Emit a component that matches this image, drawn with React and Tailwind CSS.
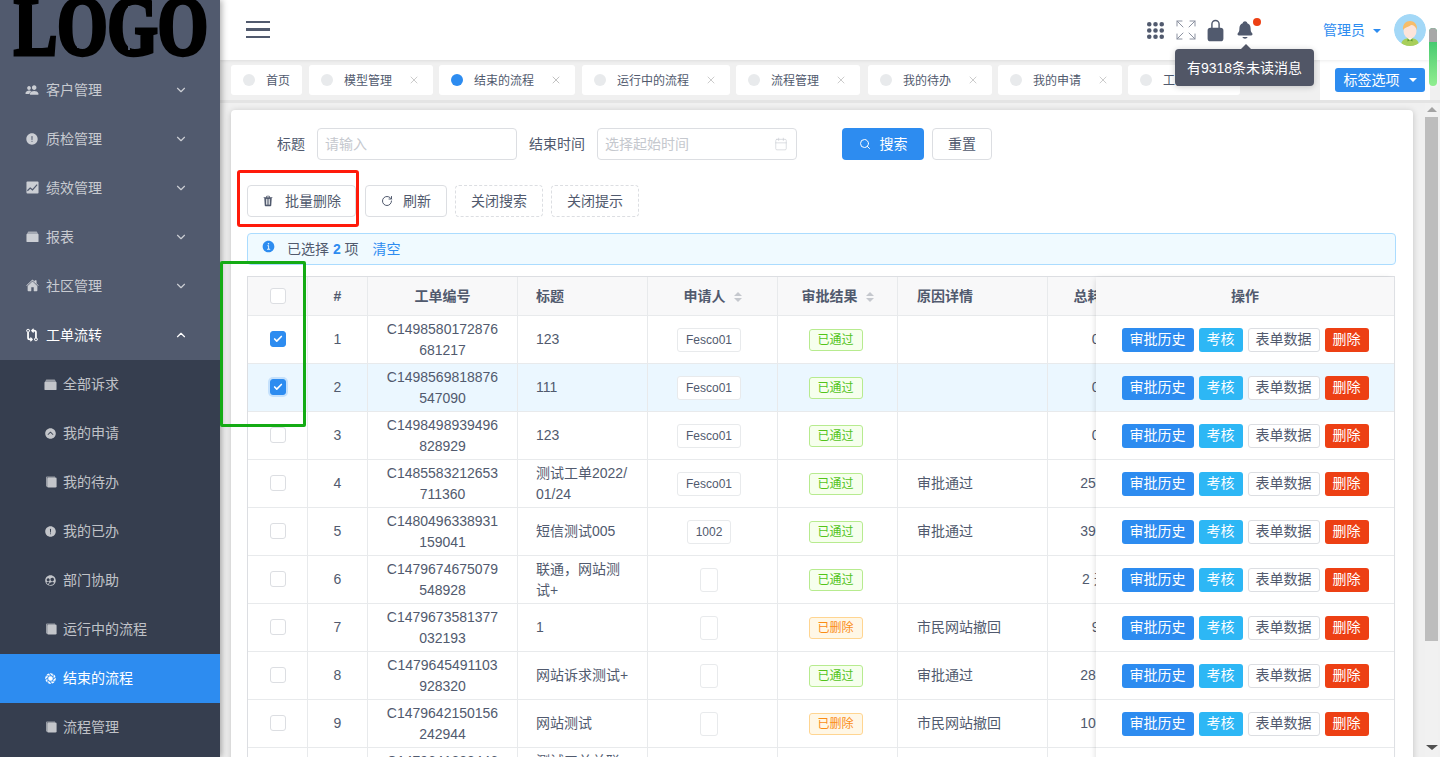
import React from "react";
import { ChevronDown, ChevronUp, Expand, X, RotateCw, Search, Calendar, Check } from "lucide-react";
import {
  IoPeople, IoAlertCircle, IoHome, IoGitCompare, IoChevronUpCircle, IoPeopleCircle, IoAperture,
  IoApps, IoLockClosed, IoNotifications, IoTrash, IoInformationCircle,
} from "react-icons/io5";

const BoxIcon = ({ s = 13 }) => (
  <svg width={s} height={s} viewBox="0 0 14 14" fill="currentColor"><path d="M2.5 1.5h9l1.5 2.5H1z" opacity=".7" /><rect x="0.5" y="4" width="13" height="9" rx="1" /></svg>
);
const StackIcon = ({ s = 12 }) => (
  <svg width={s} height={s} viewBox="0 0 12 12" fill="currentColor"><path d="M1 1.5C1 1 1.4.6 2 .6h8v1H2v9H1z" opacity=".7" /><rect x="2.2" y="1.6" width="9.4" height="9.8" rx="1.2" /></svg>
);
const ChartIcon = ({ s = 13 }) => (
  <svg width={s} height={s} viewBox="0 0 14 14"><rect x="0.5" y="0.5" width="13" height="13" rx="1" fill="currentColor" /><path d="M1.5 10.5l3-3 2.5 2 5-5.5" stroke="#515a6e" strokeWidth="1.3" fill="none" /></svg>
);

const topMenu = [
  { t: "客户管理", i: <IoPeople size={14} /> },
  { t: "质检管理", i: <IoAlertCircle size={14} /> },
  { t: "绩效管理", i: <ChartIcon /> },
  { t: "报表", i: <BoxIcon /> },
  { t: "社区管理", i: <IoHome size={13} /> },
];
const subMenu = [
  { t: "全部诉求", i: <BoxIcon /> },
  { t: "我的申请", i: <IoChevronUpCircle size={13} /> },
  { t: "我的待办", i: <StackIcon /> },
  { t: "我的已办", i: <IoAlertCircle size={13} /> },
  { t: "部门协助", i: <IoPeopleCircle size={13} /> },
  { t: "运行中的流程", i: <StackIcon /> },
  { t: "结束的流程", i: <IoAperture size={13} />, active: true },
  { t: "流程管理", i: <StackIcon /> },
];
const tabs = [
  { t: "首页", home: true, extra: "mr-[1px]" },
  { t: "模型管理" },
  { t: "结束的流程", active: true, extra: "mr-[1px]" },
  { t: "运行中的流程" },
  { t: "流程管理", extra: "mr-[2px]" },
  { t: "我的待办" },
  { t: "我的申请" },
  { t: "工作表" },
];
const rows = [
  { n: 1, a: "C1498580172876", b: "681217", title: "123", user: "Fesco01", ok: true, reason: "", time: "0小时0分0秒", checked: true },
  { n: 2, a: "C1498569818876", b: "547090", title: "111", user: "Fesco01", ok: true, reason: "", time: "0小时0分0秒", checked: true, hi: true },
  { n: 3, a: "C1498498939496", b: "828929", title: "123", user: "Fesco01", ok: true, reason: "", time: "0小时0分0秒" },
  { n: 4, a: "C1485583212653", b: "711360", title: "测试工单2022/01/24", user: "Fesco01", ok: true, reason: "审批通过", time: "25天12小时30分" },
  { n: 5, a: "C1480496338931", b: "159041", title: "短信测试005", user: "1002", ok: true, reason: "审批通过", time: "39天12小时30分" },
  { n: 6, a: "C1479674675079", b: "548928", title: "联通，网站测试+", user: "", ok: true, reason: "", time: "2 天 1小时 5分0" },
  { n: 7, a: "C1479673581377", b: "032193", title: "1", user: "", ok: false, reason: "市民网站撤回", time: "9小时0分0秒" },
  { n: 8, a: "C1479645491103", b: "928320", title: "网站诉求测试+", user: "", ok: true, reason: "审批通过", time: "28天12小时30分" },
  { n: 9, a: "C1479642150156", b: "242944", title: "网站测试", user: "", ok: false, reason: "市民网站撤回", time: "10天12小时30分" },
  { n: 10, a: "C1479641238446", b: "302156", title: "测试工单关联反馈", user: "", ok: true, reason: "", time: "0小时0分0秒" },
];

const Checkbox = ({ checked, focus }) => (
  <span className={`inline-flex w-4 h-4 items-center justify-center rounded-[3px] border align-middle ${checked ? "bg-[#2d8cf0] border-[#2d8cf0]" : "bg-white border-[#dcdee2]"} ${focus ? "shadow-[0_0_0_2px_rgba(45,140,240,0.2)]" : ""}`}>
    {checked && <Check size={10} strokeWidth={4} className="text-white" />}
  </span>
);
const Sort = () => (
  <span className="inline-flex flex-col gap-[2px] ml-2 align-middle">
    <span className="w-0 h-0 border-x-[4px] border-x-transparent border-b-[4px] border-b-[#c5c8ce]" />
    <span className="w-0 h-0 border-x-[4px] border-x-transparent border-t-[4px] border-t-[#c5c8ce]" />
  </span>
);
const Caret = ({ color = "border-t-white" }) => (
  <span className={`inline-block w-0 h-0 border-x-[4px] border-x-transparent border-t-[4px] ${color}`} />
);

const cell = "border-r border-b border-[#e8eaec] p-0 h-[48px]";
const head = "border-r border-b border-[#e8eaec] bg-[#f8f8f9] p-0 h-[39px] font-bold";

function Sidebar() {
  return (
    <aside className="w-[220px] shrink-0 bg-[#515a6e] text-sm text-white/70 relative z-10 shadow-[2px_0_6px_rgba(0,0,0,0.3)]">
      <div className="h-[65px] overflow-hidden relative">
        <div className="[font-family:'Liberation_Serif',serif] font-bold text-black text-[84px] leading-[54px] h-[54px] ml-[14px] origin-left scale-x-[0.77] [-webkit-text-stroke:4px_black] whitespace-nowrap">LOGO</div>
        <span className="absolute left-[77px] top-[8px] w-[2px] h-[40px] bg-[#515a6e]" />
        <span className="absolute left-[128px] top-[6px] w-[2px] h-[44px] bg-[#515a6e]" />
        <span className="absolute left-[181px] top-[8px] w-[2px] h-[40px] bg-[#515a6e]" />
      </div>
      {topMenu.map((m) => (
        <div key={m.t} className="h-[49px] flex items-center pl-[25px] pr-[32px]">
          <span className="w-[14px] flex justify-center">{m.i}</span>
          <span className="ml-[7px]">{m.t}</span>
          <ChevronDown size={14} className="ml-auto" />
        </div>
      ))}
      <div className="h-[49px] flex items-center pl-[25px] pr-[32px] text-white">
        <span className="w-[14px] flex justify-center"><IoGitCompare size={14} /></span>
        <span className="ml-[7px]">工单流转</span>
        <ChevronUp size={14} className="ml-auto" />
      </div>
      <div className="bg-[#363e4f] h-[400px] mt-[1px]">
        {subMenu.map((m) => (
          <div key={m.t} className={`h-[49px] flex items-center pl-[44px] pb-[1px] ${m.active ? "bg-[#2d8cf0] text-white" : ""}`}>
            <span className="w-[13px] flex justify-center">{m.i}</span>
            <span className="ml-[6px]">{m.t}</span>
          </div>
        ))}
      </div>
    </aside>
  );
}

function Avatar() {
  return (
    <svg width="32" height="32" viewBox="0 0 32 32" className="rounded-full">
      <circle cx="16" cy="16" r="16" fill="#a3d8f7" />
      <path d="M7 32c0-6 4-8 9-8s9 2 9 8z" fill="#a8cf5a" />
      <path d="M13 23.5h6l-3 2.5z" fill="#fff" />
      <path d="M13.5 25l2.5 1.2 2.5-1.2v2.4l-2.5-1.2-2.5 1.2z" fill="#5d9a2e" />
      <ellipse cx="16" cy="17" rx="6.5" ry="7.5" fill="#fde4da" />
      <path d="M9 16c-.5-6 3-9 7-9s7.500 3 7 9c-1-3-3-5-6-5-1 1.500-6 2-8 5z" fill="#f7bd6a" />
    </svg>
  );
}

function Header() {
  return (
    <header className="h-[60px] bg-white flex items-center pl-[26px] pr-[14px] relative z-[5] shadow-[0_1px_3px_rgba(0,0,0,0.08)]">
      <div className="flex flex-col gap-[5px] mt-[-1px]">
        <span className="block w-6 h-[2.5px] bg-[#515a6e]" />
        <span className="block w-6 h-[2.5px] bg-[#515a6e]" />
        <span className="block w-6 h-[2.5px] bg-[#515a6e]" />
      </div>
      <div className="ml-auto flex items-center text-[#515a6e]">
        <IoApps size={21} />
        <Expand size={24} strokeWidth={1} className="ml-[8px] text-[#8b91a0]" />
        <IoLockClosed size={23} className="ml-[6px]" />
        <div className="relative ml-[8px] w-[20px] flex justify-center">
          <IoNotifications size={20} />
          <span className="absolute -top-[2px] right-[-6px] w-2 h-2 rounded-full bg-[#ed4014]" />
          <div className="absolute left-[-60px] top-[29px] w-[139px] h-[37px] rounded bg-[#515666] text-white text-sm flex items-center justify-center shadow-[0_1px_6px_rgba(0,0,0,0.2)] whitespace-nowrap">
            <span className="absolute left-[66px] -top-[5px] w-0 h-0 border-x-[5px] border-x-transparent border-b-[5px] border-b-[#515666]" />
            有9318条未读消息
          </div>
        </div>
        <span className="ml-[68px] text-sm text-[#2d8cf0]">管理员</span>
        <span className="ml-[8px] mb-[4px]"><Caret color="border-t-[#2d8cf0]" /></span>
        <span className="ml-[13px] h-8"><Avatar /></span>
      </div>
    </header>
  );
}

function Tabs() {
  return (
    <div className="h-[40px] bg-[#f0f0f0] flex text-xs text-[#515a6e]">
      <div className="flex-1 min-w-0 overflow-hidden flex gap-[6px] pl-[11px] pt-[5px]">
        {tabs.map((t) => (
          <div key={t.t} className={`h-[30px] shrink-0 bg-white rounded-[3px] flex items-center pl-3 ${t.extra || ""}`}>
            <span className={`w-3 h-3 rounded-full ${t.active ? "bg-[#2d8cf0]" : "bg-[#e8eaec]"}`} />
            <span className="ml-[11px] pt-[1px] whitespace-nowrap">{t.t}</span>
            {t.home ? <span className="w-3" /> : <X size={12} strokeWidth={1.2} className={`ml-[16px] mr-[13px] ${t.active ? "text-[#999]" : "text-[#aaa]"}`} />}
          </div>
        ))}
      </div>
      <div className="w-[110px] shrink-0 bg-white pl-[15px] pt-[8px]">
        <button className="w-[90px] h-6 rounded-[3px] bg-[#2d8cf0] text-white text-sm flex items-center justify-center gap-[9px]">标签选项 <Caret /></button>
      </div>
      <div className="w-[10px] shrink-0" />
    </div>
  );
}

function Btn({ children, dashed, icon, width }) {
  return (
    <button className={`h-8 pb-[1px] rounded text-sm text-[#515a6e] bg-white border border-[#dcdee2] flex items-center justify-center ${width} ${dashed ? "border-dashed" : ""}`}>
      {icon}
      {children}
    </button>
  );
}

function Ops() {
  return (
    <div className="flex justify-center gap-[5px] text-sm">
      <button className="w-[72px] h-6 pb-[1px] rounded-[3px] bg-[#2d8cf0] text-white">审批历史</button>
      <button className="w-[44px] h-6 pb-[1px] rounded-[3px] bg-[#2db7f5] text-white">考核</button>
      <button className="w-[72px] h-6 pb-[1px] rounded-[3px] bg-white border border-[#dcdee2] text-[#515a6e]">表单数据</button>
      <button className="w-[44px] h-6 pb-[1px] rounded-[3px] bg-[#ed4014] text-white">删除</button>
    </div>
  );
}

function DataTable() {
  return (
    <div className="mt-[11px] flex border-t border-l border-r border-[#dcdee2] border-r-[#e0e2e6] text-sm leading-[21px] text-[#515a6e]">
      <div className="w-[848px] shrink-0 overflow-hidden">
        <table className="table-fixed w-[1100px] border-separate border-spacing-0">
          <colgroup>
            <col className="w-[60px]" /><col className="w-[60px]" /><col className="w-[150px]" /><col className="w-[130px]" />
            <col className="w-[130px]" /><col className="w-[120px]" /><col className="w-[150px]" /><col className="w-[150px]" /><col />
          </colgroup>
          <thead>
            <tr>
              <th className={`${head} pb-[1px]`}><Checkbox /></th>
              <th className={head}>#</th>
              <th className={head}>工单编号</th>
              <th className={`${head} text-left pl-[18px]`}>标题</th>
              <th className={head}>申请人<Sort /></th>
              <th className={head}>审批结果<Sort /></th>
              <th className={`${head} text-left pl-[19px]`}>原因详情</th>
              <th className={`${head} pr-[56px] whitespace-nowrap`}>总耗时</th>
              <th className={head} />
            </tr>
          </thead>
          <tbody>
            {rows.map((r) => (
              <tr key={r.n} className={r.hi ? "bg-[#ebf7ff]" : "bg-white"}>
                <td className={`${cell} text-center pb-[2px]`}><Checkbox checked={r.checked} focus={r.hi} /></td>
                <td className={`${cell} text-center`}>{r.n}</td>
                <td className={`${cell} text-center`}>{r.a}<br />{r.b}</td>
                <td className={`${cell} pl-[18px] pr-[18px] break-all`}>{r.title}</td>
                <td className={`${cell} text-center pr-[7px]`}>
                  <span className={`inline-flex h-6 mt-[1px] items-center justify-center rounded-[3px] border border-[#e8eaec] bg-white text-xs align-middle ${r.user ? "px-[8px]" : "w-[18px]"}`}>{r.user}</span>
                </td>
                <td className={`${cell} text-center pr-[4px]`}>
                  <span className={`inline-flex w-[54px] h-[22px] items-center justify-center rounded-[3px] border text-xs align-middle ${r.ok ? "border-[#b7eb8f] bg-[#f6ffed] text-[#52c41a]" : "border-[#ffd591] bg-[#fff7e6] text-[#fa8c16]"}`}>{r.ok ? "已通过" : "已删除"}</span>
                </td>
                <td className={`${cell} pl-[19px]`}>{r.reason}</td>
                <td className={`${cell} text-center pl-[18px] whitespace-nowrap`}>{r.time}</td>
                <td className={cell} />
              </tr>
            ))}
          </tbody>
        </table>
      </div>
      <div className="flex-1 min-w-0 bg-white shadow-[-2px_0_6px_-2px_rgba(0,0,0,0.15)] relative">
        <div className="h-[39px] bg-[#f8f8f9] border-b border-[#e8eaec] flex items-center justify-center font-bold">操作</div>
        {rows.map((r) => (
          <div key={r.n} className={`h-[48px] border-b border-[#e8eaec] flex items-center justify-center ${r.hi ? "bg-[#ebf7ff]" : "bg-white"}`}>
            <Ops />
          </div>
        ))}
      </div>
    </div>
  );
}

function Card() {
  return (
    <section className="w-[1182px] shrink-0 bg-white rounded shadow-[0_1px_6px_rgba(0,0,0,0.2)] pt-[18px] pl-4 pr-[18px] text-sm text-[#515a6e] h-[800px]">
      <div className="flex items-center h-8">
        <label className="w-[70px] pr-3 text-right">标题</label>
        <div className="w-[200px] h-8 border border-[#dcdee2] rounded px-[7px] flex items-center text-[#c5c8ce]">请输入</div>
        <label className="ml-3 mr-3">结束时间</label>
        <div className="w-[200px] h-8 border border-[#dcdee2] rounded px-[7px] flex items-center justify-between text-[#c5c8ce]">
          选择起始时间
          <Calendar size={14} strokeWidth={1} className="mr-[1px]" />
        </div>
        <button className="ml-[45px] w-[82px] h-8 rounded bg-[#2d8cf0] text-white flex items-center justify-center gap-[9px]"><Search size={12} strokeWidth={2} />搜索</button>
        <button className="ml-2 w-[60px] h-8 rounded border border-[#dcdee2] bg-white">重置</button>
      </div>
      <div className="flex mt-[25px] gap-2">
        <div className="w-[110px]"><Btn width="w-[109px]" icon={<IoTrash size={12} className="mr-[11px]" />}>批量删除</Btn></div>
        <Btn width="w-[82px]" icon={<RotateCw size={12} strokeWidth={2} className="mr-[10px]" />}>刷新</Btn>
        <Btn width="w-[88px]" dashed>关闭搜索</Btn>
        <Btn width="w-[88px]" dashed>关闭提示</Btn>
      </div>
      <div className="mt-4 -mr-[1px] h-8 border border-[#abdcff] bg-[#f0faff] rounded flex items-center pl-[13px]">
        <IoInformationCircle size={15} className="text-[#2d8cf0] -mt-[5px]" />
        <span className="ml-[11px]">已选择 <b className="text-[#2d8cf0]">2</b> 项</span>
        <span className="ml-[14px] text-[#2d8cf0]">清空</span>
      </div>
      <DataTable />
    </section>
  );
}

export default function App() {
  return (
    <div className="h-screen w-full overflow-hidden flex relative [font-family:'Liberation_Sans','Noto_Sans_CJK_SC',sans-serif]">
      <Sidebar />
      <main className="flex-1 min-w-0 flex flex-col">
        <Header />
        <Tabs />
        <div className="flex-1 min-h-0 overflow-hidden flex bg-[#f0f0f0] border-t-[3px] border-[#e4e4e4] pl-[11px] pt-[7px]">
          <Card />
          <div className="w-[13px] shrink-0 ml-[12px] -mt-[7px] flex flex-col items-center bg-[#f1f1f1]">
            <span className="mt-[4px] w-0 h-0 border-x-[5px] border-x-transparent border-b-[5px] border-b-[#a3a3a3]" />
            <span className="mt-[5px] w-full h-[524px] bg-[#bdbdbd]" />
            <span className="mt-auto mb-[7px] w-0 h-0 border-x-[6px] border-x-transparent border-t-[5px] border-t-[#505050]" />
          </div>
        </div>
      </main>
      {/* overlays */}
      <div className="absolute left-[237px] top-[170px] w-[122px] h-[57px] border-[3px] border-[#ff1a0a] rounded-[3px] z-20 pointer-events-none" />
      <div className="absolute left-[220px] top-[261px] w-[86px] h-[166px] border-[3px] border-[#14ab14] rounded-[2px] z-20 pointer-events-none" />
      <div className="absolute right-[3px] top-[28px] w-2 h-[58px] rounded-full overflow-hidden bg-gradient-to-b from-[#1fbf66] to-[#90ee90] z-20 shadow-[0_0_4px_rgba(255,255,255,0.9)]">
        <div className="h-[14px] bg-[#a8a8a8]" />
      </div>
    </div>
  );
}
